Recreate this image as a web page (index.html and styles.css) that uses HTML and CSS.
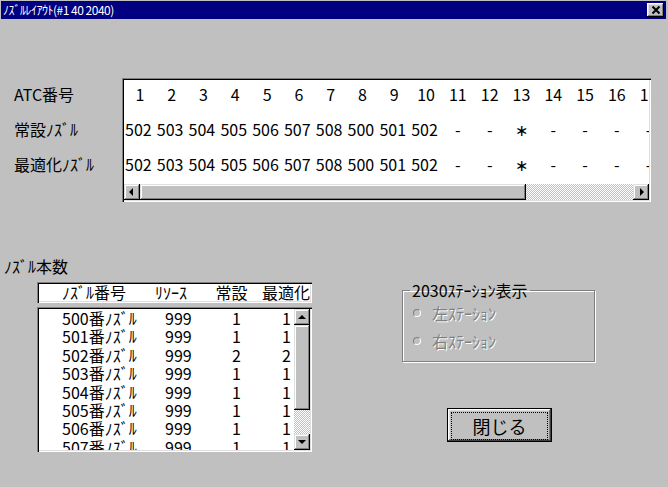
FILE: index.html
```html
<!DOCTYPE html>
<html lang="ja">
<head>
    <meta charset="UTF-8">
    <meta name="viewport" content="width=device-width, initial-scale=1.0">
    <title>ﾉｽﾞﾙﾚｲｱｳﾄ</title>
    <link rel="stylesheet" href="styles.css">
</head>
<body>
    <div class="window">
        <div class="titlebar">
            <span class="title">ﾉｽﾞﾙﾚｲｱｳﾄ(#1 40 2040)</span>
            <button type="button" class="title-close">
                <svg width="16" height="14" viewBox="0 0 16 14"><path d="M4.5 3.5 L11.5 10.5 M11.5 3.5 L4.5 10.5" stroke="#000" stroke-width="2" fill="none"/></svg>
            </button>
        </div>

        <div class="client">
            <div class="atc">
                <div class="atc-labels">
                    <div class="atc-label">ATC番号</div>
                    <div class="atc-label">常設ﾉｽﾞﾙ</div>
                    <div class="atc-label">最適化ﾉｽﾞﾙ</div>
                </div>
                <div class="atc-box">
                    <div class="atc-rows">
                        <div class="atc-row head">
                            <span>1</span><span>2</span><span>3</span><span>4</span><span>5</span><span>6</span><span>7</span><span>8</span><span>9</span><span>10</span><span>11</span><span>12</span><span>13</span><span>14</span><span>15</span><span>16</span><span>17</span>
                        </div>
                        <div class="atc-row">
                            <span>502</span><span>503</span><span>504</span><span>505</span><span>506</span><span>507</span><span>508</span><span>500</span><span>501</span><span>502</span><span class="mark">-</span><span class="mark">-</span><span class="mark">∗</span><span class="mark">-</span><span class="mark">-</span><span class="mark">-</span><span class="mark">-</span>
                        </div>
                        <div class="atc-row">
                            <span>502</span><span>503</span><span>504</span><span>505</span><span>506</span><span>507</span><span>508</span><span>500</span><span>501</span><span>502</span><span class="mark">-</span><span class="mark">-</span><span class="mark">∗</span><span class="mark">-</span><span class="mark">-</span><span class="mark">-</span><span class="mark">-</span>
                        </div>
                    </div>
                    <div class="hscroll">
                        <div class="sb-btn"><svg width="16" height="16" viewBox="0 0 16 16"><path d="M5 8 L9 4 L9 12 Z" fill="#000"/></svg></div>
                        <div class="sb-thumb h"></div>
                        <div class="sb-track"></div>
                        <div class="sb-btn"><svg width="16" height="16" viewBox="0 0 16 16"><path d="M11 8 L7 4 L7 12 Z" fill="#000"/></svg></div>
                    </div>
                </div>
            </div>

            <div class="lower">
                <div class="counts">
                    <div class="caption">ﾉｽﾞﾙ本数</div>
                    <div class="list-head">
                        <span class="c-name">ﾉｽﾞﾙ番号</span>
                        <span class="c-res">ﾘｿｰｽ</span>
                        <span class="c-fixed">常設</span>
                        <span class="c-opt">最適化</span>
                    </div>
                    <div class="list-box">
                        <div class="list-rows">
                            <div class="list-row"><span>500番ﾉｽﾞﾙ</span><span>999</span><span>1</span><span>1</span></div>
                            <div class="list-row"><span>501番ﾉｽﾞﾙ</span><span>999</span><span>1</span><span>1</span></div>
                            <div class="list-row"><span>502番ﾉｽﾞﾙ</span><span>999</span><span>2</span><span>2</span></div>
                            <div class="list-row"><span>503番ﾉｽﾞﾙ</span><span>999</span><span>1</span><span>1</span></div>
                            <div class="list-row"><span>504番ﾉｽﾞﾙ</span><span>999</span><span>1</span><span>1</span></div>
                            <div class="list-row"><span>505番ﾉｽﾞﾙ</span><span>999</span><span>1</span><span>1</span></div>
                            <div class="list-row"><span>506番ﾉｽﾞﾙ</span><span>999</span><span>1</span><span>1</span></div>
                            <div class="list-row"><span>507番ﾉｽﾞﾙ</span><span>999</span><span>1</span><span>1</span></div>
                        </div>
                        <div class="vscroll">
                            <div class="sb-btn"><svg width="16" height="16" viewBox="0 0 16 16"><path d="M4 10 L12 10 L8 6 Z" fill="#000"/></svg></div>
                            <div class="sb-thumb v"></div>
                            <div class="sb-track"></div>
                            <div class="sb-btn"><svg width="16" height="16" viewBox="0 0 16 16"><path d="M4 6 L12 6 L8 10 Z" fill="#000"/></svg></div>
                        </div>
                    </div>
                </div>

                <div class="side">
                    <fieldset class="station">
                        <legend>2030ｽﾃｰｼｮﾝ表示</legend>
                        <div class="radio first"><span class="dot"></span>左ｽﾃｰｼｮﾝ</div>
                        <div class="radio"><span class="dot"></span>右ｽﾃｰｼｮﾝ</div>
                    </fieldset>
                    <button type="button" class="close-btn"><span>閉じる</span></button>
                </div>
            </div>
        </div>
    </div>
</body>
</html>
```

FILE: styles.css
```css
html, body {
    margin: 0;
    padding: 0;
    width: 668px;
    height: 487px;
    overflow: hidden;
    background: #c0c0c0;
}

body {
    font-family: "Noto Sans CJK JP", sans-serif;
    font-size: 16px;
    color: #000;
}

/* title bar */
.titlebar {
    margin: 1px 2px 0 1px;
    height: 18px;
    background: #000080;
    display: flex;
    align-items: center;
    justify-content: space-between;
}

.title {
    font-size: 12px;
    line-height: 18px;
    letter-spacing: -0.5px;
    color: #fff;
    padding-left: 2px;
}

.title-close {
    width: 17px;
    height: 14px;
    margin-right: 2px;
    padding: 0;
    border: none;
    background: #c0c0c0;
    box-shadow: inset -1px -1px #000, inset 1px 1px #fff, inset -2px -2px #808080, inset 2px 2px #dfdfdf;
    display: flex;
    align-items: center;
    justify-content: center;
}

/* scrollbar parts */
.sb-btn {
    width: 16px;
    height: 16px;
    flex: none;
    background: #c0c0c0;
    box-shadow: inset -1px -1px #000, inset 1px 1px #dfdfdf, inset -2px -2px #808080, inset 2px 2px #fff;
}

.sb-btn svg {
    display: block;
}

.sb-thumb {
    flex: none;
    background: #c0c0c0;
    box-shadow: inset -1px -1px #000, inset 1px 1px #dfdfdf, inset -2px -2px #808080, inset 2px 2px #fff;
}

.sb-thumb.h {
    width: 386px;
}

.sb-thumb.v {
    height: 85px;
}

.sb-track {
    flex: 1;
    background: repeating-conic-gradient(#c0c0c0 0 25%, #fff 0 50%) 0 0 / 2px 2px;
}

/* ATC grid */
.atc {
    display: flex;
    align-items: flex-start;
    margin: 59px 0 0 14px;
}

.atc-labels {
    width: 108px;
    margin-top: 2px;
}

.atc-label {
    height: 35px;
    line-height: 28px;
    white-space: nowrap;
}

.atc-box {
    width: 529px;
    height: 124px;
    box-sizing: border-box;
    padding: 2px;
    box-shadow: inset 1px 1px #808080, inset 2px 2px #000, inset -1px -1px #fff, inset -2px -2px #dfdfdf;
}

.atc-rows {
    height: 104px;
    overflow: hidden;
    background: #fff;
}

.atc-row {
    display: grid;
    grid-template-columns: repeat(17, 31.8px);
    height: 35px;
    line-height: 28px;
    white-space: nowrap;
}

.atc-row span {
    padding-left: 1px;
}

.atc-row.head span,
.atc-row .mark {
    padding-left: 0;
    text-align: center;
}

.hscroll {
    display: flex;
    height: 16px;
}

/* nozzle count list */
.lower {
    display: flex;
    align-items: flex-start;
    margin-top: 54px;
    padding-left: 4px;
}

.counts {
    width: 308px;
}

.caption {
    line-height: 20px;
}

.list-head {
    display: flex;
    width: 275px;
    height: 21px;
    box-sizing: border-box;
    margin: 6px 0 0 33px;
    padding: 2px;
    background: #fff;
    line-height: 17px;
    white-space: nowrap;
    box-shadow: inset 1px 1px #808080, inset 2px 2px #000, inset -1px -1px #fff, inset -2px -2px #dfdfdf;
}

.c-name {
    width: 116px;
    padding-left: 23px;
    box-sizing: border-box;
}

.c-res {
    width: 55px;
}

.c-fixed {
    width: 43px;
    text-align: center;
}

.c-opt {
    width: 57px;
    text-align: right;
}

.list-box {
    display: flex;
    width: 275px;
    height: 145px;
    box-sizing: border-box;
    margin: 4px 0 0 33px;
    padding: 2px;
    background: #fff;
    box-shadow: inset 1px 1px #808080, inset 2px 2px #000, inset -1px -1px #fff, inset -2px -2px #dfdfdf;
}

.list-rows {
    flex: 1;
    overflow: hidden;
}

.list-row {
    display: grid;
    grid-template-columns: 116px 50px 36px 50px;
    height: 18.4px;
    line-height: 18px;
    white-space: nowrap;
}

.list-row span:nth-child(1) {
    padding-left: 23px;
}

.list-row span:nth-child(2) {
    padding-left: 10px;
}

.list-row span:nth-child(3),
.list-row span:nth-child(4) {
    text-align: right;
}

.vscroll {
    display: flex;
    flex-direction: column;
    width: 16px;
}

/* right side */
.side {
    margin-left: 90px;
    padding-top: 25px;
}

.station {
    width: 193px;
    box-sizing: border-box;
    margin: 0;
    padding: 0 0 11px 10px;
    min-width: 0;
    border: 1px solid #808080;
    box-shadow: 1px 1px 0 #fff, inset 1px 1px 0 #fff;
}

.station legend {
    margin-left: -3px;
    padding: 0 2px;
    line-height: 18px;
}

.radio {
    display: flex;
    align-items: center;
    height: 18px;
    margin-top: 10px;
    color: #808080;
    text-shadow: 1px 1px 0 #fff;
}

.radio.first {
    margin-top: 5px;
}

.dot {
    width: 8px;
    height: 8px;
    box-sizing: border-box;
    margin-right: 11px;
    border-radius: 50%;
    border: 1px solid #808080;
    border-right-color: #fff;
    border-bottom-color: #fff;
    background: #c0c0c0;
}

.close-btn {
    display: block;
    width: 105px;
    height: 34px;
    box-sizing: border-box;
    margin: 46px 0 0 45px;
    padding: 3px;
    border: 1px solid #000;
    background: #c0c0c0;
    font-family: inherit;
    font-size: 18px;
    color: #000;
    box-shadow: inset -1px -1px #404040, inset 1px 1px #fff, inset -2px -2px #808080, inset 2px 2px #dfdfdf;
}

.close-btn span {
    display: flex;
    align-items: center;
    justify-content: center;
    height: 100%;
    border: 1px dotted #000;
}
```
